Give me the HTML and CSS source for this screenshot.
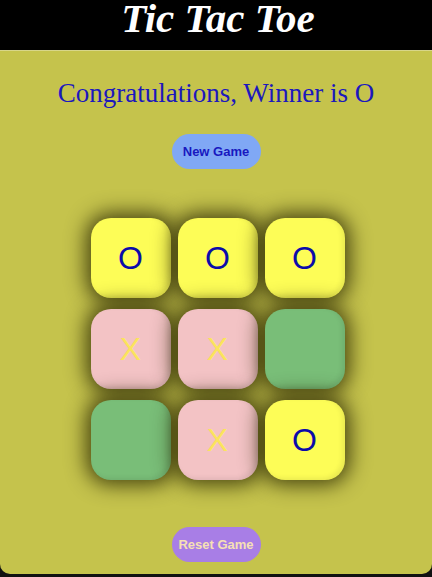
FILE: index.html
```html
<!DOCTYPE html>
<html lang="en">
<head>
<meta charset="utf-8">
<title>Tic Tac Toe</title>
<link rel="stylesheet" href="styles.css">
</head>
<body>
<header class="topbar"><h1 class="title">Tic Tac Toe</h1></header>
<main class="game">
  <p class="msg">Congratulations, Winner is O</p>
  <button class="btn new">New Game</button>
  <div class="board">
    <div class="cell o">O</div>
    <div class="cell o">O</div>
    <div class="cell o">O</div>
    <div class="cell x">X</div>
    <div class="cell x">X</div>
    <div class="cell e"></div>
    <div class="cell e"></div>
    <div class="cell x">X</div>
    <div class="cell o">O</div>
  </div>
  <button class="btn reset">Reset Game</button>
</main>
</body>
</html>
```
FILE: styles.css
```css
html, body { margin: 0; padding: 0; }
body {
  background: #111;
  width: 432px;
  height: 577px;
  overflow: hidden;
  font-family: "Liberation Sans", Arial, sans-serif;
}
.topbar {
  background: #000;
  height: 50px;
  display: flex;
  justify-content: center;
  align-items: flex-start;
}
.title {
  margin: 0;
  color: #fff;
  font-family: "Liberation Serif", "Times New Roman", serif;
  font-style: italic;
  font-weight: bold;
  font-size: 41px;
  line-height: 36px;
  padding-left: 4px;
}
.game {
  background: #c5c34c;
  border-top: 1px solid #d8d68a;
  height: 524px;
  box-sizing: border-box;
  border-radius: 0 0 10px 10px;
  display: flex;
  flex-direction: column;
  align-items: center;
  padding-top: 27px;
}
.msg {
  margin: 0;
  font-family: "Liberation Serif", "Times New Roman", serif;
  font-size: 27px;
  line-height: 30px;
  color: #1c18bd;
}
.btn {
  border: none;
  height: 35px;
  width: 89px;
  border-radius: 18px;
  font-family: "Liberation Sans", Arial, sans-serif;
  font-weight: bold;
  font-size: 13px;
  padding: 0;
}
.new {
  margin-top: 26px;
  background: #80a8f5;
  color: #1818c0;
}
.reset {
  margin-top: 47px;
  background: #a87ee6;
  color: #f6e0b4;
}
.board {
  margin-top: 49px;
  margin-left: 3px;
  display: grid;
  grid-template-columns: repeat(3, 80px);
  grid-auto-rows: 80px;
  column-gap: 7px;
  row-gap: 11px;
}
.cell {
  border-radius: 20px;
  display: flex;
  align-items: center;
  justify-content: center;
  font-family: "Liberation Sans", Arial, sans-serif;
  font-size: 32px;
  box-shadow: 0 0 20px 5px rgba(40, 38, 0, 0.8), inset -3px -2px 5px rgba(0,0,0,0.08);
}
.o { background: #fdfd57; color: #0b0baa; }
.x { background: #f3c3c5; color: #fbe45c; }
.e { background: #79be78; }
```
